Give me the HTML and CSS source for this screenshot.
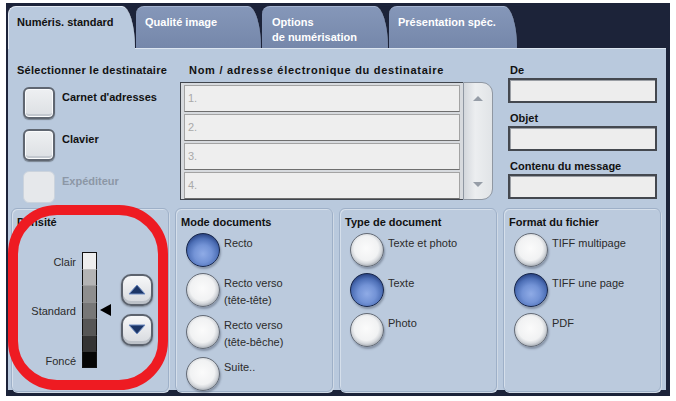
FILE: index.html
```html
<!DOCTYPE html>
<html lang="fr">
<head>
<meta charset="utf-8">
<title>Numérisation</title>
<link rel="stylesheet" href="styles.css">
</head>
<body>
<div class="frame">
  <div class="tabs">
    <div class="tab active">Numéris. standard</div>
    <div class="tab t2">Qualité image</div>
    <div class="tab t3">Options<br>de numérisation</div>
    <div class="tab t4">Présentation spéc.</div>
  </div>
  <div class="panel">
    <div class="upper">
      <div class="col-dest">
        <div class="title wide-a">Sélectionner le destinataire</div>
        <div class="dest-btns">
          <div class="dest-row"><span class="sqbtn"></span><span class="dest-label">Carnet d'adresses</span></div>
          <div class="dest-row"><span class="sqbtn"></span><span class="dest-label">Clavier</span></div>
          <div class="dest-row disabled"><span class="sqbtn"></span><span class="dest-label">Expéditeur</span></div>
        </div>
      </div>
      <div class="col-list">
        <div class="title wide-b">Nom / adresse électronique du destinataire</div>
        <div class="listbox">
          <div class="rows">
            <div class="row">1.</div>
            <div class="row">2.</div>
            <div class="row">3.</div>
            <div class="row">4.</div>
          </div>
          <div class="scroll">
            <span class="arr up"></span>
            <span class="arr down"></span>
          </div>
        </div>
      </div>
      <div class="col-mail">
        <div class="title">De</div>
        <div class="field"></div>
        <div class="title">Objet</div>
        <div class="field"></div>
        <div class="title">Contenu du message</div>
        <div class="field"></div>
      </div>
    </div>
    <div class="groups">
      <div class="group density">
        <div class="title">Densité</div>
        <div class="density-body">
          <div class="scale">
            <span class="lbl r1">Clair</span>
            <span class="lbl r4">Standard</span>
            <span class="lbl r7">Foncé</span>
            <span class="seg s1"></span>
            <span class="seg s2"></span>
            <span class="seg s3"></span>
            <span class="seg s4"></span>
            <span class="seg s5"></span>
            <span class="seg s6"></span>
            <span class="seg s7"></span>
            <svg class="pointer" width="11" height="12" viewBox="0 0 11 12"><polygon points="0,6 11,0 11,12" fill="#000"/></svg>
          </div>
          <div class="stepper">
            <div class="step"><svg width="18" height="11" viewBox="0 0 18 11"><polygon points="9,1 17,10 1,10" fill="#1b3566" stroke="#6f8cc2" stroke-width="1"/></svg></div>
            <div class="step"><svg width="18" height="11" viewBox="0 0 18 11"><polygon points="1,1 17,1 9,10" fill="#1b3566" stroke="#6f8cc2" stroke-width="1"/></svg></div>
          </div>
        </div>
        <svg class="ring" width="160" height="185" viewBox="0 0 160 185"><rect x="5" y="5" width="150" height="175" rx="44" ry="44" fill="none" stroke="#ee1b22" stroke-width="10"/></svg>
      </div>
      <div class="group">
        <div class="title">Mode documents</div>
        <div class="radios">
          <div class="opt"><span class="radio on"></span><span class="opt-label">Recto</span></div>
          <div class="opt"><span class="radio"></span><span class="opt-label">Recto verso<br>(tête-tête)</span></div>
          <div class="opt"><span class="radio"></span><span class="opt-label">Recto verso<br>(tête-bêche)</span></div>
          <div class="opt"><span class="radio"></span><span class="opt-label">Suite..</span></div>
        </div>
      </div>
      <div class="group">
        <div class="title">Type de document</div>
        <div class="radios">
          <div class="opt"><span class="radio"></span><span class="opt-label">Texte et photo</span></div>
          <div class="opt"><span class="radio on"></span><span class="opt-label">Texte</span></div>
          <div class="opt"><span class="radio"></span><span class="opt-label">Photo</span></div>
        </div>
      </div>
      <div class="group">
        <div class="title">Format du fichier</div>
        <div class="radios">
          <div class="opt"><span class="radio"></span><span class="opt-label">TIFF multipage</span></div>
          <div class="opt"><span class="radio on"></span><span class="opt-label">TIFF une page</span></div>
          <div class="opt"><span class="radio"></span><span class="opt-label">PDF</span></div>
        </div>
      </div>
    </div>
  </div>
</div>
</body>
</html>
```

FILE: styles.css
```css
* { box-sizing: border-box; }
html, body { margin: 0; padding: 0; background: #fff; }
body {
  font-family: "Liberation Sans", Arial, sans-serif;
  font-size: 11px;
  color: #2a2a2a;
}

.frame {
  margin: 3px 0 0 6px;
  width: 664px;
  height: 393px;
  padding: 3px 4px 6px 2px;
  background: #1c2339;
  display: flex;
  flex-direction: column;
}

/* tabs */
.tabs { display: flex; gap: 1px; height: 42px; }
.tab {
  width: 125px;
  height: 42px;
  padding: 8px 0 0 9px;
  border-top: 1px solid #a6b5d0;
  border-radius: 8px 13px 0 0 / 8px 42px 0 0;
  background: linear-gradient(#8597b9, #7587aa);
  color: #fff;
  font-weight: bold;
  line-height: 14px;
  white-space: nowrap;
}
.tab.active {
  width: 127px;
  height: 43px;
  margin-bottom: -1px;
  padding-left: 8px;
  background: #b9c9dd;
  color: #111;
  border-top-color: #e4ebf4;
  border-left: 1px solid #e4ebf4;
  position: relative;
  z-index: 1;
}
.tab.t3 { width: 126px; line-height: 15px; padding-left: 10px; }
.tab.t4 { width: 128px; }

/* panel */
.panel {
  flex: 1;
  background: #b9c9dd;
  border-top: 1px solid #dce5f0;
  display: flex;
  flex-direction: column;
}
.title {
  font-weight: bold;
  color: #111;
  line-height: 14px;
  white-space: nowrap;
}
.title.wide-a { letter-spacing: 0.25px; }
.title.wide-b { letter-spacing: 0.72px; }

.upper { display: flex; height: 159px; padding-top: 14px; }

.col-dest { width: 172px; padding-left: 9px; }
.dest-btns {
  margin-top: 10px;
  padding-left: 6px;
  display: flex;
  flex-direction: column;
  gap: 10px;
}
.dest-row { display: flex; gap: 7px; }
.dest-label { padding-top: 3px; line-height: 14px; font-weight: bold; color: #111; }
.sqbtn {
  width: 32px;
  height: 32px;
  flex: none;
  border: 2px solid #5f6671;
  border-radius: 6px;
  background: linear-gradient(#eef0f2, #dcdfe3);
  box-shadow: inset 0 0 0 1px #fbfcfd, inset 0 -3px 0 #c3c8cf, 0 1px 1px rgba(0,0,0,.35);
}
.disabled .sqbtn {
  border: 1px solid #cbd3dd;
  background: #e6e8eb;
  box-shadow: none;
}
.disabled .dest-label { color: #8c97a6; }

.col-list { width: 313px; }
.col-list .title { padding-left: 9px; }
.listbox { display: flex; margin-top: 5px; height: 118px; }
.rows {
  width: 283px;
  border: 1px solid #40454d;
  border-right: none;
  background: #d7dade;
  padding: 2px 3px 0 3px;
  display: flex;
  flex-direction: column;
  gap: 2px;
}
.row {
  height: 27px;
  flex: none;
  background: #eeeeee;
  border: 1px solid #a3a3a3;
  border-bottom-color: #6e6e6e;
  line-height: 25px;
  padding-left: 3px;
  color: #a9a9a9;
}
.scroll {
  width: 30px;
  border: 1px solid #8f97a2;
  border-radius: 0 11px 11px 0;
  background: linear-gradient(90deg, #d3d7dc, #eceef0 40%, #e1e4e7);
  display: flex;
  flex-direction: column;
  justify-content: space-between;
  align-items: center;
  padding: 13px 0 12px;
}
.arr { width: 0; height: 0; border-left: 5px solid transparent; border-right: 5px solid transparent; }
.arr.up { border-bottom: 5px solid #969da7; }
.arr.down { border-top: 5px solid #969da7; }

.col-mail { width: 150px; margin-left: 15px; }
.col-mail .title { padding-left: 2px; margin-top: 8px; }
.col-mail .title:first-child { margin-top: 0; }
.field {
  width: 149px;
  height: 25px;
  margin-top: 1px;
  border: 2px solid #44484f;
  background: #ededed;
  box-shadow: inset 1px 1px 0 #9a9ea4;
}

/* groups */
.groups {
  display: grid;
  grid-template-columns: repeat(4, 158px);
  gap: 6px;
  padding-left: 3px;
  height: 180px;
}
.group {
  position: relative;
  border: 1px solid #9eb0c8;
  border-radius: 6px;
  background: #bbcadd;
  box-shadow: inset 1px 1px 0 #d5dfeb, 1px 1px 0 #d0dae6;
  padding-top: 6px;
}
.group .title { padding-left: 5px; }

.radios {
  margin-top: 4px;
  padding-left: 10px;
  display: flex;
  flex-direction: column;
  gap: 6px;
}
.opt { display: flex; gap: 4px; }
.opt-label { padding-top: 2px; line-height: 17px; color: #2b2b2b; white-space: nowrap; }
.radio {
  width: 34px;
  height: 34px;
  flex: none;
  border-radius: 50%;
  border: 1px solid #646b76;
  background: radial-gradient(circle at 48% 45%, #fbfbfb 0%, #f1f2f3 50%, #d6d9dd 62%, #a3a9b1 75%, #777d86 89%, #b9bdc3 100%);
  box-shadow: 1px 2px 2px rgba(40,50,70,.35);
}
.radio.on {
  border-color: #17264a;
  background: radial-gradient(circle at 50% 62%, #8fabe6 0%, #7393d6 35%, #4d6fb6 60%, #2c4686 77%, #1d2f5e 90%, #34496f 100%);
}

/* density */
.density-body {
  display: flex;
  align-items: center;
  margin-top: 23px;
  padding-left: 5px;
}
.scale {
  display: grid;
  grid-template-columns: 65px 17px 12px;
  grid-template-rows: repeat(7, 16.5px);
}
.lbl {
  grid-column: 1;
  align-self: end;
  text-align: right;
  padding-right: 6px;
  line-height: 14px;
  color: #2b2b2b;
}
.lbl.r1 { grid-row: 1; }
.lbl.r4 { grid-row: 4; }
.lbl.r7 { grid-row: 7; }
.seg {
  grid-column: 2;
  width: 15px;
  border-left: 1px solid #111;
  border-right: 1px solid #111;
  border-top: 1px solid rgba(255,255,255,.18);
}
.s1 { grid-row: 1; background: #eeeeee; border-top: 1px solid #111; }
.s2 { grid-row: 2; background: #b4b4b4; }
.s3 { grid-row: 3; background: #8e8e8e; }
.s4 { grid-row: 4; background: #777777; }
.s5 { grid-row: 5; background: #565656; }
.s6 { grid-row: 6; background: #343434; }
.s7 { grid-row: 7; background: #060606; border-bottom: 1px solid #111; }
.pointer { grid-column: 3; grid-row: 4; align-self: center; margin-left: 1px; }

.stepper {
  margin-left: 10px;
  display: flex;
  flex-direction: column;
  gap: 8px;
}
.step {
  width: 32px;
  height: 32px;
  border: 2px solid #5c636e;
  border-radius: 10px;
  background: linear-gradient(#f7f8f9, #d6d9de);
  box-shadow: inset 0 -3px 0 #bdc2c9, 0 1px 2px rgba(0,0,0,.35);
  display: flex;
  align-items: center;
  justify-content: center;
}
.step svg { display: block; }

.ring {
  position: absolute;
  left: -4px;
  top: -4px;
  z-index: 2;
}
```
